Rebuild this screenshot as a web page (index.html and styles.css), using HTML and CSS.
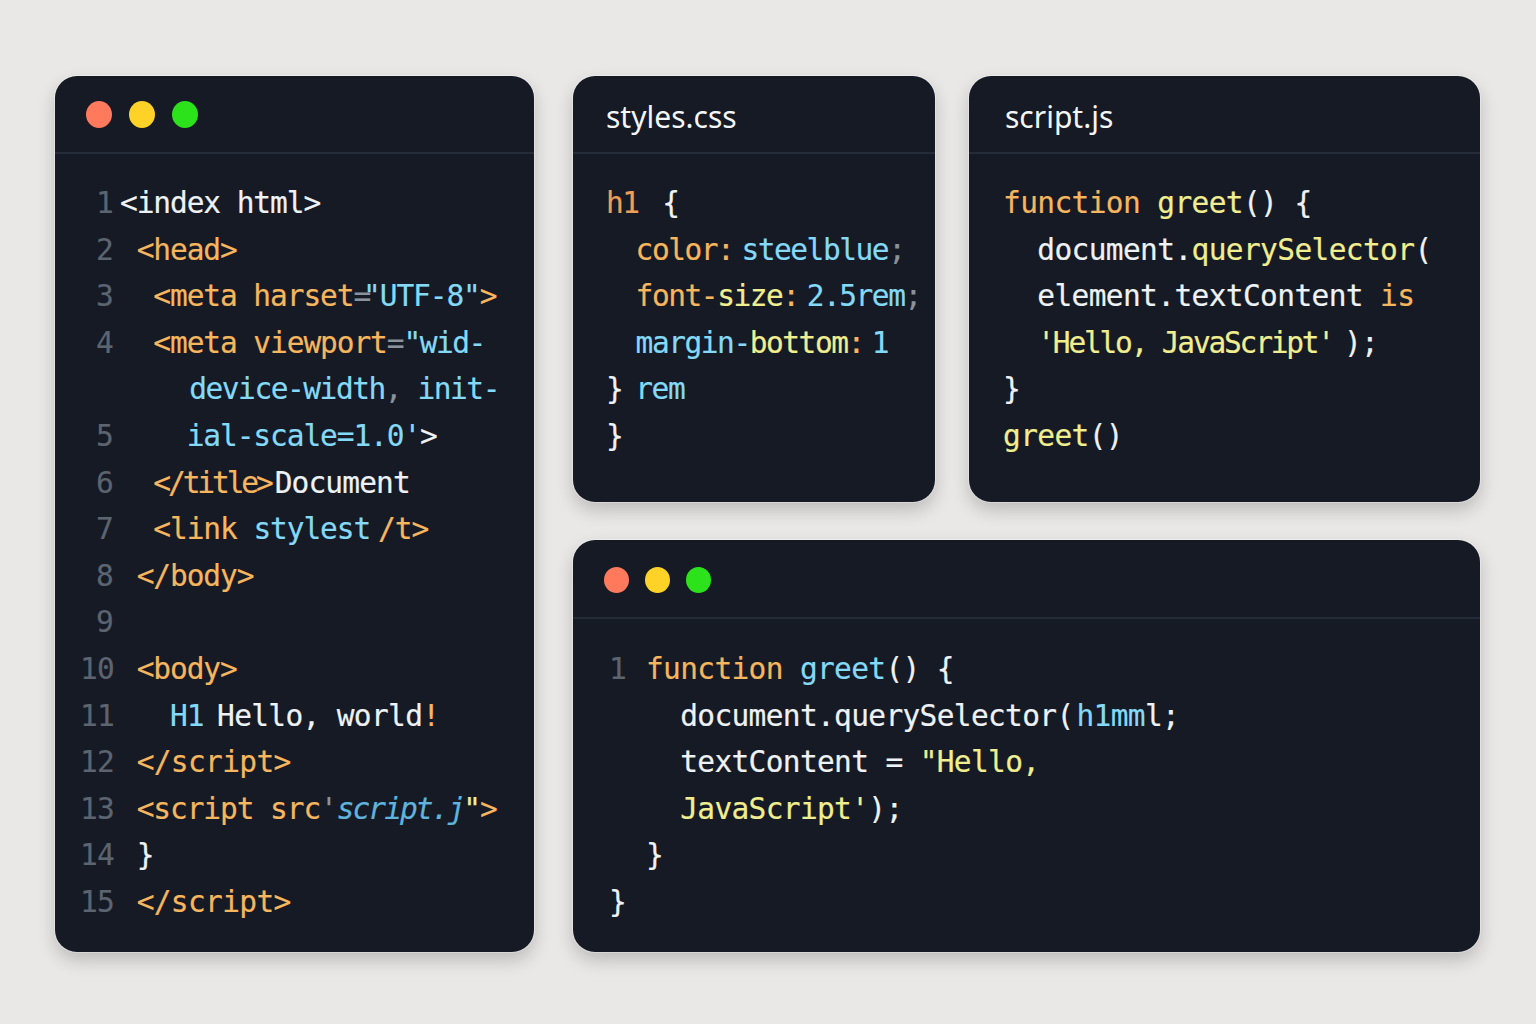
FILE: index.html
```html
<!DOCTYPE html>
<html lang="en">
<head>
<meta charset="utf-8">
<title>Code editors</title>
<link rel="stylesheet" href="styles.css">
</head>
<body>
<main class="layout">
  <section class="card card-html">
    <header class="bar bar-dots"><span class="dot red"></span><span class="dot yellow"></span><span class="dot green"></span></header>
    <div class="code numbered">
      <div class="ln"><b>1</b><code><span class="w">&lt;index html&gt;</span></code></div>
      <div class="ln"><b>2</b><code> <span class="o">&lt;head&gt;</span></code></div>
      <div class="ln"><b>3</b><code>  <span class="o">&lt;meta harset</span><span class="g">=</span><span class="b pull">"UTF-8"</span><span class="o">&gt;</span></code></div>
      <div class="ln"><b>4</b><code>  <span class="o">&lt;meta viewport</span><span class="g">=</span><span class="b n163">"wid-</span></code></div>
      <div class="ln"><b></b><code class="n163 nudge">    <span class="b">device-width</span><span class="g">,</span> <span class="b">init-</span></code></div>
      <div class="ln"><b>5</b><code>    <span class="b">ial-scale=1.0'</span><span class="w">&gt;</span></code></div>
      <div class="ln"><b>6</b><code>  <span class="o n146">&lt;/title&gt;</span><span class="w n169 nudge">Document</span></code></div>
      <div class="ln"><b>7</b><code>  <span class="o">&lt;link</span> <span class="b">stylest</span><span class="o hs">/t&gt;</span></code></div>
      <div class="ln"><b>8</b><code> <span class="o">&lt;/body&gt;</span></code></div>
      <div class="ln"><b>9</b><code></code></div>
      <div class="ln"><b>10</b><code> <span class="o">&lt;body&gt;</span></code></div>
      <div class="ln"><b>11</b><code>   <span class="b">H1</span> <span class="w n171 back">Hello, world</span><span class="o">!</span></code></div>
      <div class="ln"><b>12</b><code> <span class="o n171">&lt;/script&gt;</span></code></div>
      <div class="ln"><b>13</b><code> <span class="o">&lt;script src</span><span class="g">'</span><span class="s n158 shift-sm"><em>script.j</em></span><span class="y">"</span><span class="o">&gt;</span></code></div>
      <div class="ln"><b>14</b><code> <span class="w">}</span></code></div>
      <div class="ln"><b>15</b><code> <span class="o n171">&lt;/script&gt;</span></code></div>
    </div>
  </section>
  <div class="right">
    <div class="top">
      <section class="card card-css">
        <header class="bar bar-title">styles.css</header>
        <div class="code plain">
          <div class="ln"><code><span class="h">h1</span>  <span class="w brace">{</span></code></div>
          <div class="ln"><code class="ind">  <span class="o">color:</span><span class="b hs">steelblue</span><span class="g">;</span></code></div>
          <div class="ln"><code class="ind">  <span class="o">font-</span><span class="y">size</span><span class="o">:</span><span class="b hs">2.5rem</span><span class="g">;</span></code></div>
          <div class="ln"><code class="ind">  <span class="b">margin-</span><span class="y">bottom</span><span class="o">:</span><span class="b hs">1</span></code></div>
          <div class="ln"><code><span class="w">}</span><span class="b rem">rem</span></code></div>
          <div class="ln"><code><span class="w">}</span></code></div>
        </div>
      </section>
      <section class="card card-js">
        <header class="bar bar-title">script.js</header>
        <div class="code plain">
          <div class="ln"><code><span class="o">function</span> <span class="y">greet</span><span class="w">() {</span></code></div>
          <div class="ln"><code>  <span class="w">document.</span><span class="y">querySelector</span><span class="w">(</span></code></div>
          <div class="ln"><code>  <span class="w">element.textContent</span> <span class="o">is</span></code></div>
          <div class="ln"><code>  <span class="y n155">'Hello, JavaScript'</span><span class="w close">);</span></code></div>
          <div class="ln"><code><span class="w">}</span></code></div>
          <div class="ln"><code><span class="y">greet</span><span class="w">()</span></code></div>
        </div>
      </section>
    </div>
    <section class="card card-wide">
      <header class="bar bar-dots"><span class="dot red"></span><span class="dot yellow"></span><span class="dot green"></span></header>
      <div class="code numbered wide">
        <div class="ln"><b>1</b><code><span class="o">function</span> <span class="b">greet</span><span class="w">() {</span></code></div>
        <div class="ln"><b></b><code>  <span class="w">document.querySelector(</span><span class="b shift">h1mm</span><span class="w">l;</span></code></div>
        <div class="ln"><b></b><code>  <span class="w">textContent =</span> <span class="y">"Hello,</span></code></div>
        <div class="ln"><b></b><code>  <span class="y">JavaScript'</span><span class="w">);</span></code></div>
        <div class="ln"><b></b><code><span class="w">}</span></code></div>
        <div class="ln"><b class="w">}</b><code></code></div>
      </div>
    </section>
  </div>
</main>
</body>
</html>
```
FILE: styles.css
```css
* { box-sizing: border-box; }
html, body { margin: 0; height: 100%; }
body {
  width: 1536px;
  height: 1024px;
  overflow: hidden;
  background: #e9e8e6;
  font-family: "DejaVu Sans Mono", monospace;
}
.layout {
  display: flex;
  gap: 39px;
  padding: 76px 56px 72px 55px;
  height: 1024px;
}
.right { display: flex; flex-direction: column; gap: 38px; width: 907px; }
.top { display: flex; gap: 34px; height: 426px; }
.card {
  background: #151a25;
  border-radius: 22px;
  box-shadow: 0 0 0 1px rgba(255,255,255,.35), 0 8px 18px rgba(0,0,0,.2);
}
.card-html { width: 479px; }
.card-css { width: 362px; }
.card-js { width: 511px; }
.card-wide { flex: 1; }
.bar {
  height: 78px;
  border-bottom: 2px solid #242c39;
  display: flex;
  align-items: center;
}
.bar-dots { gap: 17px; padding: 0 0 0 31px; }
.card-wide .bar { height: 79px; padding: 2px 0 0 31px; gap: 16px; }
.bar-title {
  padding: 6px 0 0 33px;
  color: #f3f5f7;
  font: 30px/1 "Noto Sans", sans-serif;
}
.card-js .bar-title { padding-left: 36px; }
.dot { flex: none; width: 26px; height: 27px; border-radius: 50%; display: block; }
.card-wide .dot { width: 25px; height: 26px; }
.red { background: #ff7a5c; }
.yellow { background: #ffd227; }
.green { background: #2be21b; }
.code { padding-top: 26px; font-size: 29.5px; letter-spacing: -1.09px; -webkit-text-stroke: .2px; }
.numbered { padding-left: 25px; }
.wide { padding-top: 27px; padding-left: 33px; letter-spacing: -.66px; }
.plain { padding-left: 33px; letter-spacing: -1.46px; }
.card-js .plain { padding-left: 34px; letter-spacing: -.62px; }
.ln { display: flex; height: 46.6px; line-height: 46.6px; white-space: pre; }
.ln b { width: 33px; text-align: right; font-weight: 400; color: #5c6470; margin-right: 7px; letter-spacing: -0.8px; }
.wide .ln b { width: 20px; margin-right: 20px; }
.wide .ln b.w { color: #eef2f5; }
code { font: inherit; white-space: pre; }
.o { color: #f6b65d; }
.b { color: #84d9f6; }
.y { color: #f1ee8f; }
.w { color: #eef2f5; }
.g { color: #8b929c; }
.s { color: #5fb3dd; }
.h { color: #ef9f55; }
.pull { margin-left: -7px; }
.hs { margin-left: 8px; }
.nudge { margin-left: 4px; }
.back { margin-left: -3px; }
.shift { margin-left: 3px; }
.shift-sm { margin-left: 0; }
.ind { margin-left: -3px; }
.brace { margin-left: -9px; }
.rem { margin-left: 13px; }
.close { margin-left: 11px; }
.n146 { letter-spacing: -3.1px; }
.n155 { letter-spacing: -2.2px; }
.n158 { letter-spacing: -1.95px; }
.n163 { letter-spacing: -1.46px; }
.n169 { letter-spacing: -.86px; }
.n171 { letter-spacing: -.66px; }
```
